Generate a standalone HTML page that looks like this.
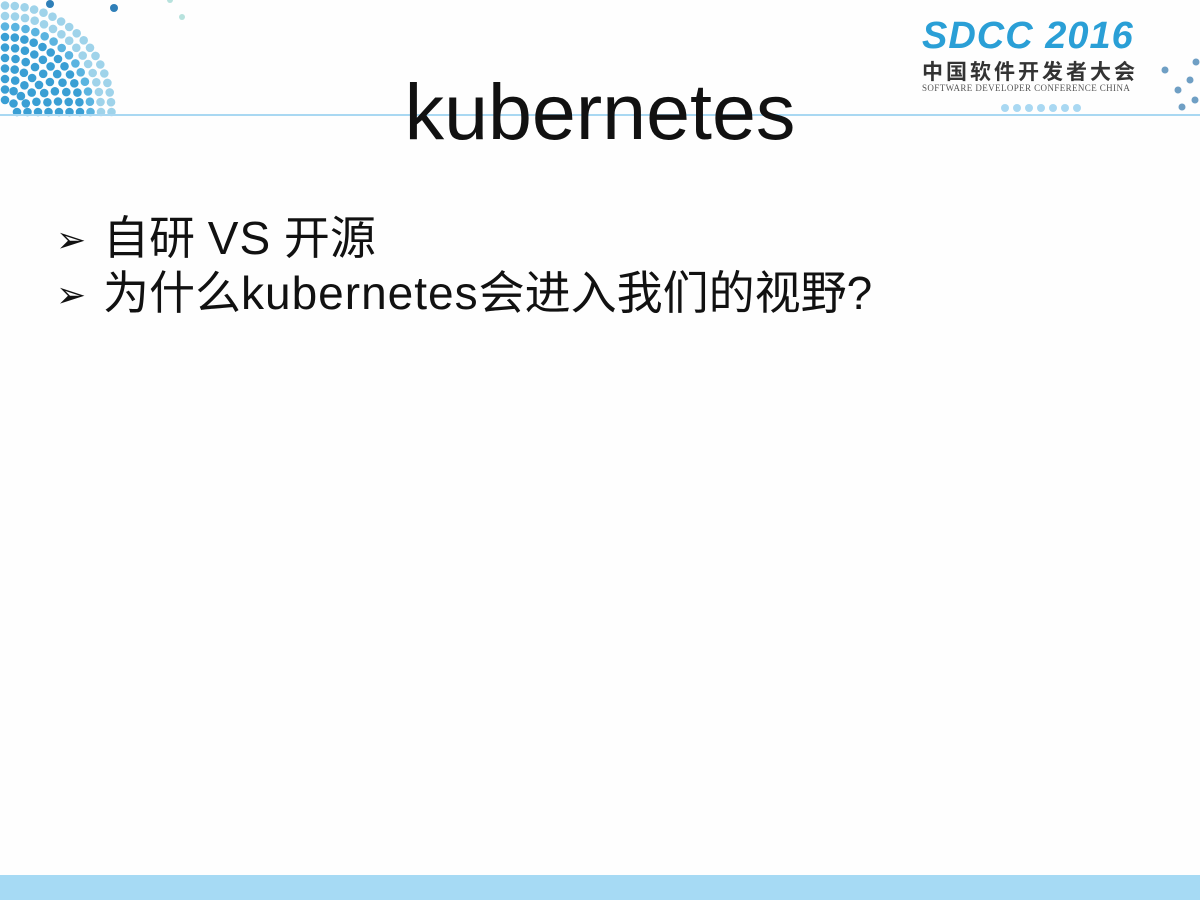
<!DOCTYPE html>
<html><head><meta charset="utf-8"><style>
body{margin:0;width:1200px;height:900px;background:#fefefe;position:relative;overflow:hidden;font-family:"Liberation Sans","Noto Sans CJK SC",sans-serif}
.line{position:absolute;left:0;top:114px;width:1200px;height:2px;background:#a9d8f2}
.bar{position:absolute;left:0;top:875px;width:1200px;height:25px;background:#a6daf4}
h1{position:absolute;left:0;width:1200px;text-align:center;top:64px;margin:0;font-weight:normal;font-size:79px;color:#111;line-height:96px}
.b{position:absolute;left:56px;font-size:46px;color:#111;line-height:52px;white-space:nowrap}
.b span{font-size:36px;display:inline-block;width:47px;vertical-align:2px}
.b i{font-style:normal;letter-spacing:1px}
.logo{position:absolute;left:922px;top:16px;font-family:"Liberation Sans",sans-serif;font-weight:bold;font-style:italic;font-size:38px;color:#2a9fd6;letter-spacing:1px;line-height:40px}
.cn{position:absolute;left:922px;top:58px;font-family:"Noto Sans CJK SC",sans-serif;font-weight:bold;font-size:21px;color:#333;letter-spacing:3px;line-height:26px}
.en{position:absolute;left:922px;top:83px;font-family:"Liberation Serif",serif;font-size:9px;color:#555;letter-spacing:0.4px}
</style></head><body>
<svg id="dots" width="1200" height="120" style="position:absolute;left:0;top:0"></svg>
<div class="line"></div>
<div class="logo">SDCC 2016</div>
<div class="cn">中国软件开发者大会</div>
<div class="en">SOFTWARE DEVELOPER CONFERENCE CHINA</div>
<h1>kubernetes</h1>
<div class="b" style="top:212px"><span>➢</span>自研 <i>VS</i> 开源</div>
<div class="b" style="top:267px"><span>➢</span>为什么<i>kubernetes</i>会进入我们的视野?</div>
<div class="bar"></div>
<script>
var s=document.getElementById('dots'),h='';
var cx=5,cy=112;
for(var r=12;r<=112;r+=10.5){var n=Math.round(Math.PI/2*r/10);for(var i=0;i<=n;i++){var a=i/n*Math.PI/2;var x=cx+r*Math.sin(a),y=cy-r*Math.cos(a);if(y>113)continue;var col=r>95?'#9fd3ea':(r>80?'#5bb4e0':'#3a9fd4');h+='<circle cx="'+x.toFixed(1)+'" cy="'+y.toFixed(1)+'" r="4.3" fill="'+col+'"/>';}}
h+='<circle cx="114" cy="8" r="4" fill="#2f7fb8"/><circle cx="50" cy="4" r="4" fill="#2f7fb8"/><circle cx="182" cy="17" r="3" fill="#b7e2dd"/><circle cx="170" cy="0" r="3" fill="#b7e2dd"/>';
var p=[[1165,70],[1190,80],[1178,90],[1195,100],[1182,107],[1196,62]];
p.forEach(function(q){h+='<circle cx="'+q[0]+'" cy="'+q[1]+'" r="3.5" fill="#6f9fc4"/>'});
for(var k=0;k<7;k++)h+='<circle cx="'+(1005+k*12)+'" cy="108" r="4" fill="#a9d8f2"/>';
s.innerHTML=h;
</script>
</body></html>
